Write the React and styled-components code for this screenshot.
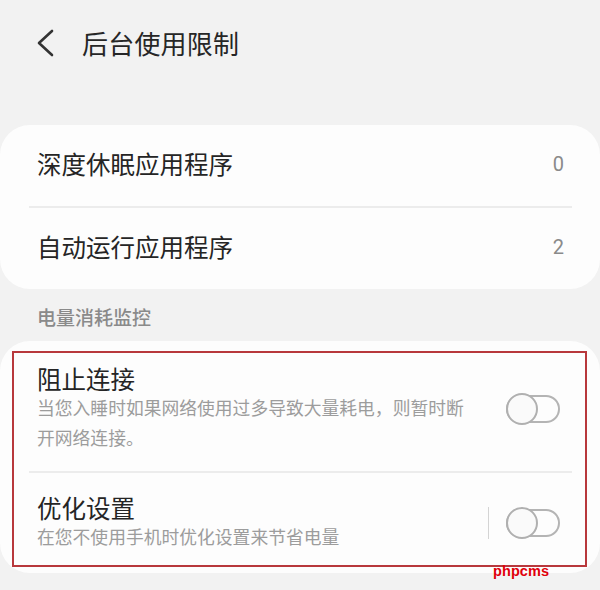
import React from "react";
import styled, { createGlobalStyle } from "styled-components";

const GlobalStyle = createGlobalStyle`
  html, body {
    margin: 0;
    padding: 0;
    background: #f2f2f2;
  }
  body {
    font-family: "Noto Sans CJK SC", "Noto Sans", sans-serif;
    color: #252525;
  }
`;

const Screen = styled.div`
  position: relative;
  width: 600px;
  height: 590px;
  overflow: hidden;
  background: #f2f2f2;
`;

const TopBar = styled.header`
  height: 88px;
  display: flex;
  align-items: center;
  padding-left: 36px;
  box-sizing: border-box;
`;

const BackButton = styled.button`
  width: 20px;
  height: 30px;
  padding: 0;
  border: none;
  background: none;
  display: flex;
  align-items: center;
  justify-content: flex-start;
  margin-right: 26px;
  margin-top: -2px;
`;

const Title = styled.h1`
  margin: -2px 0 0;
  font-size: 26px;
  font-weight: 400;
  line-height: 32px;
  color: #262626;
  letter-spacing: 0.2px;
`;

const Card = styled.section`
  position: relative;
  background: #fdfdfd;
  border-radius: 30px;
  margin-top: ${(p) => p.$top || 0}px;
`;

const Divider = styled.div`
  height: 2px;
  margin: 0 28px 0 29px;
  background: #ececec;
`;

const LinkRow = styled.div`
  height: 81px;
  box-sizing: border-box;
  padding: 0 36px 3px 37px;
  display: flex;
  align-items: center;
  justify-content: space-between;
`;

const RowLabel = styled.span`
  font-size: 24.5px;
  line-height: 30px;
  color: #252525;
`;

const Count = styled.span`
  font-family: "Roboto", "Noto Sans", sans-serif;
  font-size: 20px;
  color: #8a8a8a;
`;

const SectionLabel = styled.div`
  height: 52px;
  box-sizing: border-box;
  padding: 16px 0 0 37px;
  font-size: 19px;
  line-height: 24px;
  font-weight: 500;
  color: #8a8a8a;
`;

const SwitchRow = styled.div`
  display: flex;
  align-items: center;
  justify-content: space-between;
  padding: ${(p) => p.$pad};
  padding-left: 37px;
  padding-right: 40px;
`;

const TextBlock = styled.div`
  width: 442px;
`;

const SwitchTitle = styled.div`
  font-size: 24.5px;
  line-height: 27px;
  color: #252525;
`;

const Hint = styled.div`
  font-size: 17.8px;
  line-height: 30px;
  color: #9c9c9c;
`;

const Controls = styled.div`
  display: flex;
  align-items: center;
  gap: 17px;
`;

const VRule = styled.div`
  width: 1.5px;
  height: 32px;
  background: #d4d4d4;
`;

const Track = styled.div`
  position: relative;
  width: 54px;
  height: 28px;
  box-sizing: border-box;
  border: 2px solid #b4b4b4;
  border-radius: 14px;
  background: #fdfdfd;
`;

const Knob = styled.div`
  position: absolute;
  left: -2px;
  top: -4px;
  width: 32px;
  height: 32px;
  box-sizing: border-box;
  border: 2px solid #b0b0b0;
  border-radius: 50%;
  background: #fafafa;
`;

const Highlight = styled.div`
  position: absolute;
  left: 12px;
  right: 13px;
  top: 10px;
  bottom: 6px;
  border: 2px solid #b8383c;
  pointer-events: none;
`;

const Watermark = styled.span`
  position: absolute;
  left: 493px;
  top: 563px;
  font-family: "Liberation Sans", Arial, sans-serif;
  font-weight: 700;
  font-size: 14.5px;
  color: #e0000b;
  letter-spacing: 0.1px;
`;

function Chevron() {
  return (
    <svg width="20" height="30" viewBox="0 0 20 30">
      <polyline
        points="16,3 3,15 16,27"
        fill="none"
        stroke="#333"
        strokeWidth="2.6"
        strokeLinecap="round"
        strokeLinejoin="round"
      />
    </svg>
  );
}

function Toggle() {
  return (
    <Track>
      <Knob />
    </Track>
  );
}

export default function App() {
  return (
    <>
      <GlobalStyle />
      <Screen>
        <TopBar>
          <BackButton aria-label="返回">
            <Chevron />
          </BackButton>
          <Title>后台使用限制</Title>
        </TopBar>

        <Card $top={37}>
          <LinkRow>
            <RowLabel>深度休眠应用程序</RowLabel>
            <Count>0</Count>
          </LinkRow>
          <Divider />
          <LinkRow>
            <RowLabel>自动运行应用程序</RowLabel>
            <Count>2</Count>
          </LinkRow>
        </Card>

        <SectionLabel>电量消耗监控</SectionLabel>

        <Card>
          <SwitchRow $pad="24px 0 19px">
            <TextBlock>
              <SwitchTitle>阻止连接</SwitchTitle>
              <Hint>当您入睡时如果网络使用过多导致大量耗电，则暂时断开网络连接。</Hint>
            </TextBlock>
            <Controls>
              <Toggle />
            </Controls>
          </SwitchRow>
          <Divider />
          <SwitchRow $pad="21px 0 22px">
            <TextBlock>
              <SwitchTitle>优化设置</SwitchTitle>
              <Hint>在您不使用手机时优化设置来节省电量</Hint>
            </TextBlock>
            <Controls>
              <VRule />
              <Toggle />
            </Controls>
          </SwitchRow>
          <Highlight />
        </Card>

        <Watermark>phpcms</Watermark>
      </Screen>
    </>
  );
}
